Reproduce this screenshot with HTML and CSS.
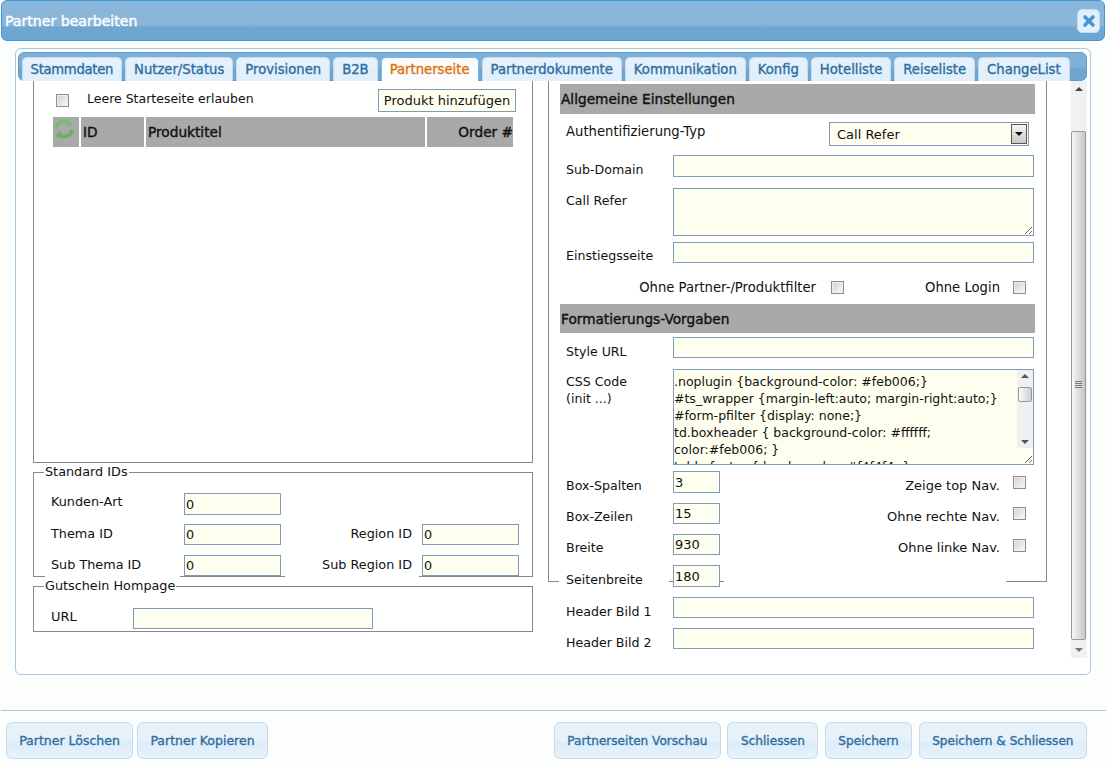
FILE: index.html
```html
<!DOCTYPE html>
<html lang="de">
<head>
  <meta charset="UTF-8">
  <title>Partner bearbeiten</title>
  <link rel="stylesheet" href="styles.css">
</head>
<body>
  <div class="titlebar">
    <span class="titlebar-text">Partner bearbeiten</span>
    <a class="close-btn">
      <svg viewBox="0 0 14 14" width="14" height="14"><path d="M3 3l8 8M11 3l-8 8" stroke="#4a94d2" stroke-width="3.6" stroke-linecap="round" fill="none"/></svg>
    </a>
  </div>

  <div class="panel">
    <ul class="tab-nav">
      <li class="tab">Stammdaten</li>
      <li class="tab">Nutzer/Status</li>
      <li class="tab">Provisionen</li>
      <li class="tab">B2B</li>
      <li class="tab active">Partnerseite</li>
      <li class="tab">Partnerdokumente</li>
      <li class="tab">Kommunikation</li>
      <li class="tab">Konfig</li>
      <li class="tab">Hotelliste</li>
      <li class="tab">Reiseliste</li>
      <li class="tab">ChangeList</li>
    </ul>

    <div class="pane">
      <div class="left">
        <div class="product-box">
          <div class="product-top">
            <input type="checkbox" class="check check-start">
            <label class="start-label">Leere Starteseite erlauben</label>
            <button class="add-btn">Produkt hinzufügen</button>
          </div>
          <table class="product-table">
            <colgroup><col class="c1"><col class="c2"><col class="c3"><col class="c4"></colgroup>
            <tr>
              <th class="refresh-cell">
                <svg class="refresh-icon" viewBox="0 0 22 20" width="22" height="20">
                  <path d="M3 9.5C3.5 4 9.5 1 14.5 3.6" fill="none" stroke="#7cbb76" stroke-width="4"/>
                  <path d="M12.5 0L20 3.2 14.5 9Z" fill="#7cbb76"/>
                  <path d="M19 10.5C18.5 16 12.5 19 7.5 16.4" fill="none" stroke="#6fb069" stroke-width="4"/>
                  <path d="M9.5 20L2 16.8 7.5 11Z" fill="#6fb069"/>
                </svg>
              </th>
              <th>ID</th>
              <th>Produktitel</th>
              <th class="order">Order #</th>
            </tr>
          </table>
        </div>

        <fieldset class="group group-ids">
          <legend>Standard IDs</legend>
          <div class="id-row id-row-first">
            <label class="id-label">Kunden-Art</label>
            <div class="id-input"><input class="field field-tall" value="0"></div>
          </div>
          <div class="id-row">
            <label class="id-label">Thema ID</label>
            <div class="id-input"><input class="field" value="0"></div>
            <label class="id-label-right">Region ID</label>
            <input class="field" value="0">
          </div>
          <div class="id-row">
            <label class="id-label">Sub Thema ID</label>
            <div class="id-input"><input class="field" value="0"></div>
            <label class="id-label-right">Sub Region ID</label>
            <input class="field" value="0">
          </div>
        </fieldset>

        <fieldset class="group group-voucher">
          <legend>Gutschein Hompage</legend>
          <div class="voucher-row">
            <label class="voucher-label">URL</label>
            <input class="field voucher-input">
          </div>
        </fieldset>
      </div>

      <div class="right">
        <div class="settings">
          <h2 class="section">Allgemeine Einstellungen</h2>
          <div class="row row-auth">
            <label class="row-label row-label-top">Authentifizierung-Typ</label>
            <div class="select">
              <span class="select-value">Call Refer</span>
              <span class="select-btn"></span>
            </div>
          </div>
          <div class="row row-sub">
            <label class="row-label">Sub-Domain</label>
            <input class="field field-wide field-tall">
          </div>
          <div class="row row-call">
            <label class="row-label row-label-area">Call Refer</label>
            <textarea class="area area-call"></textarea>
          </div>
          <div class="row row-entry">
            <label class="row-label row-label-mid">Einstiegsseite</label>
            <input class="field field-wide">
          </div>
          <div class="row row-flags">
            <label>Ohne Partner-/Produktfilter</label>
            <input type="checkbox" class="check check-a">
            <label class="flag-login">Ohne Login</label>
            <input type="checkbox" class="check check-b">
          </div>
          <h2 class="section section-format">Formatierungs-Vorgaben</h2>
          <div class="row row-style">
            <label class="row-label">Style URL</label>
            <input class="field field-wide">
          </div>
          <div class="row row-css">
            <label class="row-label row-label-area">CSS Code<br>(init ...)</label>
            <div class="css-wrap">
              <textarea class="area area-css">.noplugin {background-color: #feb006;}
#ts_wrapper {margin-left:auto; margin-right:auto;}
#form-pfilter {display: none;}
td.boxheader { background-color: #ffffff;
color:#feb006; }
table.footer { border-color: #f4f4f4; }</textarea>
              <div class="css-scroll">
                <span class="mini-up"></span>
                <span class="mini-thumb"></span>
                <span class="mini-down"></span>
              </div>
            </div>
          </div>
          <div class="row row-num row-num-first">
            <label class="row-label">Box-Spalten</label>
            <input class="field field-num field-tall" value="3">
            <label class="num-flag">Zeige top Nav.</label>
            <input type="checkbox" class="check check-b check-num">
          </div>
          <div class="row row-num">
            <label class="row-label row-label-mid">Box-Zeilen</label>
            <input class="field field-num" value="15">
            <label class="num-flag num-flag-mid">Ohne rechte Nav.</label>
            <input type="checkbox" class="check check-b check-num-mid">
          </div>
          <div class="row row-num">
            <label class="row-label row-label-mid">Breite</label>
            <input class="field field-num" value="930">
            <label class="num-flag num-flag-mid">Ohne linke Nav.</label>
            <input type="checkbox" class="check check-b check-num">
          </div>
          <div class="row-page">
            <label class="page-label">Seitenbreite</label>
            <input class="field field-num field-tall" value="180">
            <span class="page-gap"></span>
          </div>
        </div>
        <div class="row row-header">
          <label class="row-label">Header Bild 1</label>
          <input class="field field-wide">
        </div>
        <div class="row row-header-2">
          <label class="row-label">Header Bild 2</label>
          <input class="field field-wide">
        </div>

        <div class="scrollbar">
          <span class="arrow-up"></span>
          <span class="thumb"><i></i></span>
          <span class="arrow-down"></span>
        </div>
      </div>
    </div>
  </div>

  <div class="footer">
    <div class="footer-group">
      <button class="btn btn-delete">Partner Löschen</button>
      <button class="btn btn-copy">Partner Kopieren</button>
    </div>
    <div class="footer-group footer-right">
      <button class="btn">Partnerseiten Vorschau</button>
      <button class="btn">Schliessen</button>
      <button class="btn">Speichern</button>
      <button class="btn">Speichern &amp; Schliessen</button>
    </div>
  </div>
</body>
</html>
```

FILE: styles.css
```css
* {
  margin: 0;
  padding: 0;
  box-sizing: border-box;
}

body {
  width: 1106px;
  height: 767px;
  overflow: hidden;
  background: #fcfdfd;
  font-family: "DejaVu Sans", Verdana, sans-serif;
  font-size: 13px;
  line-height: 20px;
  color: #111;
}

input, button, textarea {
  font-family: inherit;
  font-size: inherit;
  color: inherit;
}

/* title bar */
.titlebar {
  height: 41px;
  margin: 0 1px;
  padding: 0 5px 0 3px;
  display: flex;
  align-items: center;
  justify-content: space-between;
  border: 1px solid #4297d7;
  border-radius: 6px;
  background: linear-gradient(#8ab7da 0, #88b5d9 62%, #6fa7d1 68%, #6ba4cf 100%);
}

.titlebar-text {
  color: #fff;
  font-size: 14.1px;
  -webkit-text-stroke: .4px #fff;
}

.close-btn {
  width: 23px;
  height: 24px;
  margin-right: -1px;
  display: flex;
  align-items: center;
  justify-content: center;
  border: 1px solid #c5dbec;
  border-radius: 5px;
  background: #dfeffc;
}

/* tabs */
.panel {
  width: 1076px;
  height: 627px;
  margin: 7px 0 0 15px;
  padding: 3px 3px 0 2px;
  border: 1px solid #a6c9e2;
  border-radius: 6px;
  background: #fff;
}

.tab-nav {
  height: 29px;
  padding: 4px 0 0 2.6px;
  display: flex;
  gap: 3px;
  list-style: none;
  border-radius: 6px;
  background: linear-gradient(#7fb0d7 0, #7fb0d7 50%, #6ea6d0 60%, #6ea6d0 100%);
  border: 1px solid #5c9ccc;
}

.tab {
  height: 24px;
  padding: 2px 8px 0;
  font-size: 13.2px;
  color: #2e6e9e;
  -webkit-text-stroke: .35px #2e6e9e;
  white-space: nowrap;
  border: 1px solid #c5dbec;
  border-bottom: 0;
  border-radius: 5px 5px 0 0;
  background: linear-gradient(#e6f1fb, #dfeffc);
}

.tab:first-child {
  letter-spacing: -.3px;
}

.tab.active {
  color: #e17009;
  -webkit-text-stroke: .35px #e17009;
  background: #fbfcfd;
  border-color: #79b7e7;
}

/* content */
.pane {
  display: flex;
  gap: 15px;
  height: 577px;
  padding-left: 15px;
}

.left {
  width: 500px;
}

.product-box {
  height: 382px;
  border: 1px solid #888;
  border-top: 0;
}

.product-top {
  height: 36px;
  padding-top: 8px;
  display: flex;
  align-items: flex-start;
}

.check {
  appearance: none;
  width: 13px;
  height: 13px;
  flex: none;
  border: 1px solid #8e8e8e;
  background: linear-gradient(135deg, #cfcfcf, #fbfbfb);
  box-shadow: inset 0 0 0 1px #eee;
}

.check-start {
  margin: 5px 0 0 22px;
}

.start-label {
  margin-left: 18px;
  font-size: 12.5px;
}

.add-btn {
  width: 138px;
  height: 23px;
  margin-left: auto;
  margin-right: 16px;
  border: 1px solid #7c9cbc;
  background: #fffff0;
  white-space: nowrap;
}

.product-table {
  margin-left: 17px;
  table-layout: fixed;
  width: 464px;
  border-collapse: separate;
  border-spacing: 2px 0;
}

.c1 { width: 26px; }
.c2 { width: 63px; }
.c3 { width: 279px; }
.c4 { width: 86px; }

.product-table th {
  height: 30px;
  padding: 0 0 0 2px;
  background: #a9a9a9;
  text-align: left;
  font-size: 13.7px;
  font-weight: normal;
  -webkit-text-stroke: .4px #111;
}

.product-table th.order {
  padding: 0;
  text-align: right;
}

.product-table th.refresh-cell {
  padding: 0;
  line-height: 0;
  vertical-align: top;
}

.refresh-icon {
  margin: 2px 0 0 0;
}

.group {
  border: 1px solid #888;
  min-width: 0;
  margin-top: -1px;
}

.group legend {
  margin-left: 10px;
  padding: 0 1px;
  font-size: 12.8px;
}

.group-ids {
  height: 115px;
}

.group-voucher {
  height: 56px;
}

.id-row {
  height: 22px;
  margin-bottom: 9px;
  display: flex;
  margin-left: 11px;
  font-size: 12.8px;
}

.id-row-first {
  margin-top: 10px;
  margin-bottom: 10px;
}

.id-row-first .id-input {
  padding-top: 1px;
}

.id-label {
  width: 135px;
  padding-left: 6px;
  background: #fff;
}

.id-input {
  width: 105px;
  padding: 0 4px;
}

.id-label-right {
  width: 134px;
  padding-right: 7px;
  text-align: right;
  background: #fff;
}

.id-row > .field {
  margin-left: 3px;
}

.field {
  display: block;
  width: 97px;
  height: 21px;
  padding: 0 1px;
  border: 1px solid #7c9cbc;
  background: #fffff0;
  border-radius: 0;
  outline: 0;
}

.field-tall {
  height: 22px;
}

.voucher-row {
  margin-top: 11px;
  display: flex;
  padding-left: 17px;
}

.voucher-label {
  width: 82px;
}

.voucher-input {
  width: 240px;
  margin-top: 1px;
}

/* right column */
.right {
  position: relative;
  width: 539px;
}

.settings {
  width: 499px;
  height: 501px;
  padding: 3px 11px 0;
  border: 1px solid #888;
  border-top: 0;
}

.section {
  height: 30px;
  padding-left: 1px;
  background: #a9a9a9;
  font-size: 13.7px;
  line-height: 30px;
  font-weight: normal;
  -webkit-text-stroke: .4px #111;
}

.section-format {
  height: 29px;
  margin-top: 8px;
  line-height: 31px;
}

.row {
  display: flex;
  align-items: flex-start;
  height: 21px;
  padding-left: 6px;
  padding-right: 1px;
}

.row-label {
  width: 107px;
  flex: none;
  margin-top: 5px;
  font-size: 12.6px;
}

.row-label-top { margin-top: 0; width: auto; font-size: 13.2px; }
.row-label-mid { margin-top: 4px; }
.row-label-area { margin-top: 4px; line-height: 17px; }

.row-auth { margin-top: 8px; height: 24px; }
.row-sub { margin-top: 9px; height: 22px; }
.row-call { margin-top: 11px; height: 48px; }
.row-entry { margin-top: 6px; }
.row-style { margin-top: 4px; }
.row-css { margin-top: 11px; height: 96px; }
.row-num { margin-top: 10px; }
.row-num-first { margin-top: 6px; height: 22px; }

.field-wide {
  width: 361px;
}

.field-num {
  width: 47px;
}

.select {
  width: 200px;
  height: 24px;
  margin-left: auto;
  margin-right: 5px;
  padding: 2px 7px;
  display: flex;
  justify-content: space-between;
  border: 1px solid #7c9cbc;
  background: #fffff0;
}

.select-btn {
  position: relative;
  width: 16px;
  height: 20px;
  margin: -1px -6px 0 0;
  border: 1px solid #555;
  background: linear-gradient(#f4f4f4, #c9c9c9);
}

.select-btn::after {
  content: "";
  position: absolute;
  left: 3px;
  top: 7px;
  border: 4px solid transparent;
  border-top: 4px solid #111;
  border-bottom: 0;
}

.area {
  display: block;
  border: 1px solid #7c9cbc;
  background: #fffff0;
  border-radius: 0;
  outline: 0;
}

.area-call {
  width: 361px;
  height: 48px;
}

.css-wrap {
  position: relative;
}

.area-css {
  width: 361px;
  height: 96px;
  padding: 3px 0 0;
  font-size: 12.5px;
  line-height: 17px;
  overflow: hidden;
}

.css-scroll {
  position: absolute;
  top: 1px;
  right: 1px;
  width: 16px;
  height: 78px;
  background: #f0f0f0;
}

.mini-up, .mini-down {
  position: absolute;
  left: 4px;
  border: 4px solid transparent;
}

.mini-up {
  top: 4px;
  border-top: 0;
  border-bottom: 4px solid #555;
}

.mini-down {
  bottom: 4px;
  border-bottom: 0;
  border-top: 4px solid #555;
}

.mini-thumb {
  position: absolute;
  top: 17px;
  left: 1px;
  width: 14px;
  height: 15px;
  border: 1px solid #999;
  border-radius: 2px;
  background: linear-gradient(90deg, #fafafa, #d0d0d0);
}

.row-flags {
  margin-top: 15px;
  justify-content: flex-end;
  padding-right: 9px;
  height: 18px;
  font-size: 13.2px;
}

.row-flags .check { margin-top: 3px; }
.check-a { margin-left: 15px; }
.flag-login { margin-left: 81px; }
.check-b { margin-left: 13px; }

.row-num {
  padding-right: 9px;
}

.num-flag {
  margin-left: auto;
  margin-top: 5px;
}

.num-flag-mid {
  margin-top: 4px;
}

.row-num .num-flag + .check-num { margin-top: 5px; }
.row-num .num-flag + .check-num-mid { margin-top: 4px; }

.row-page {
  display: flex;
  margin-top: 10px;
  margin-left: -1px;
  height: 22px;
}

.page-label {
  width: 110px;
  margin-right: 4px;
  padding: 5px 0 0 7px;
  font-size: 12.6px;
  background: #fff;
}

.page-gap {
  width: 282px;
  margin-left: 4px;
  background: #fff;
}

.row-header {
  margin: 15px 0 0 12px;
}

.row-header-2 {
  margin: 10px 0 0 12px;
}

.row-header, .row-header-2 {
  width: 475px;
}

.scrollbar {
  position: absolute;
  top: 0;
  right: 0;
  width: 16px;
  height: 577px;
  background: #f1f1f1;
}

.arrow-up, .arrow-down {
  position: absolute;
  left: 4px;
  border: 4px solid transparent;
}

.arrow-up {
  top: 6px;
  border-top: 0;
  border-bottom: 4px solid #444;
}

.arrow-down {
  bottom: 6px;
  border-bottom: 0;
  border-top: 4px solid #777;
}

.thumb {
  position: absolute;
  top: 50px;
  left: 0;
  width: 15px;
  height: 509px;
  border: 1px solid #999;
  border-radius: 2px;
  background: linear-gradient(90deg, #f8f8f8, #c6c6c6);
}

.thumb i {
  position: absolute;
  left: 3px;
  top: 249px;
  width: 7px;
  height: 7px;
  background: repeating-linear-gradient(#777 0, #777 1px, transparent 1px, transparent 2px);
}

/* footer */
.footer {
  height: 56px;
  margin: 35px 0 0 1px;
  padding: 11px 19px 0 5px;
  display: flex;
  justify-content: space-between;
  border-top: 1px solid #a6c9e2;
}

.footer-group {
  display: flex;
  gap: 6px;
}

.footer-right {
  gap: 6.5px;
}

.btn {
  height: 37px;
  padding: 0 12px;
  font-size: 12.5px;
  color: #2e6e9e;
  -webkit-text-stroke: .35px #2e6e9e;
  white-space: nowrap;
  border: 1px solid #c5dbec;
  border-radius: 6px;
  background: linear-gradient(#e6f1fa 0, #e6f1fa 50%, #dcecf9 55%, #e8f3fd 100%);
}

.footer-right .btn {
  padding: 0 12.5px;
  font-size: 12.1px;
}

.btn-delete { width: 127px; }
.btn-copy { width: 131px; margin-left: -2px; }
```
